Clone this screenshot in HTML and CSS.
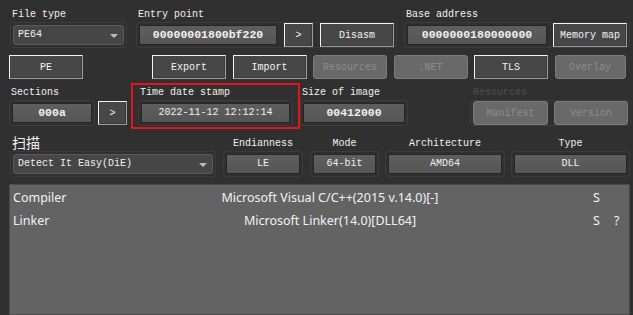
FILE: index.html
```html
<!DOCTYPE html>
<html lang="en">
<head>
  <meta charset="UTF-8">
  <title>Detect It Easy - PE</title>
  <link rel="stylesheet" href="styles.css">
</head>
<body>
  <div class="row row-top">
    <div class="grp g-filetype">
      <div class="lbl">File type</div>
      <div class="frame">
        <div class="combo w-ft">PE64<span class="arrow"></span></div>
      </div>
    </div>
    <div class="grp g-entry">
      <div class="lbl">Entry point</div>
      <div class="frame">
        <div class="field bold w-entry">00000001800bf220</div>
        <button class="btn w-go">&gt;</button>
        <button class="btn w-disasm">Disasm</button>
      </div>
    </div>
    <div class="grp g-base">
      <div class="lbl">Base address</div>
      <div class="frame">
        <div class="field bold w-base">0000000180000000</div>
        <button class="btn w-mmap">Memory map</button>
      </div>
    </div>
  </div>

  <div class="row row-btns">
    <button class="btn w-74">PE</button>
    <button class="btn w-74 b-export">Export</button>
    <button class="btn w-74">Import</button>
    <button class="btn w-74 off">Resources</button>
    <button class="btn w-74 off">.NET</button>
    <button class="btn w-74">TLS</button>
    <button class="btn w-72 off">Overlay</button>
  </div>

  <div class="row row-sec">
    <div class="grp g-sections">
      <div class="lbl">Sections</div>
      <div class="frame">
        <div class="field bold w-sec">000a</div>
      </div>
    </div>
    <button class="btn w-go b-sec">&gt;</button>
    <div class="grp g-time">
      <div class="lbl">Time date stamp</div>
      <div class="frame">
        <div class="field w-time">2022-11-12 12:12:14</div>
      </div>
    </div>
    <div class="grp g-size">
      <div class="lbl">Size of image</div>
      <div class="frame">
        <div class="field bold w-size">00412000</div>
      </div>
    </div>
    <div class="grp g-res">
      <div class="lbl dim">Resources</div>
      <div class="frame">
        <button class="btn off w-manifest">Manifest</button>
        <button class="btn off w-74">Version</button>
      </div>
    </div>
  </div>

  <div class="row row-scan">
    <div class="grp g-scan">
      <div class="lbl cjk">扫描</div>
      <div class="frame">
        <div class="combo w-scan">Detect It Easy(DiE)<span class="arrow"></span></div>
      </div>
    </div>
    <div class="grp g-endian center">
      <div class="lbl">Endianness</div>
      <div class="frame">
        <div class="field w-le">LE</div>
      </div>
    </div>
    <div class="grp g-mode center">
      <div class="lbl">Mode</div>
      <div class="frame">
        <div class="field w-mode">64-bit</div>
      </div>
    </div>
    <div class="grp g-arch center">
      <div class="lbl">Architecture</div>
      <div class="frame">
        <div class="field w-arch">AMD64</div>
      </div>
    </div>
    <div class="grp g-type center">
      <div class="lbl">Type</div>
      <div class="frame">
        <div class="field w-type">DLL</div>
      </div>
    </div>
  </div>

  <div class="results">
    <div class="res-row">
      <span class="res-name">Compiler</span>
      <span class="res-val">Microsoft Visual C/C++(2015 v.14.0)[-]</span>
      <span class="res-s">S</span>
      <span class="res-q"></span>
    </div>
    <div class="res-row">
      <span class="res-name">Linker</span>
      <span class="res-val">Microsoft Linker(14.0)[DLL64]</span>
      <span class="res-s">S</span>
      <span class="res-q">?</span>
    </div>
  </div>
</body>
</html>
```

FILE: styles.css
```css
* {
  box-sizing: border-box;
}
body {
  margin: 0;
  width: 633px;
  height: 315px;
  background-color: #303030;
  color: #f0f0f0;
  font-family: "Liberation Mono", "DejaVu Sans Mono", monospace;
  font-size: 10px;
  overflow: hidden;
}
.row {
  display: flex;
  align-items: flex-end;
}
.grp {
  display: flex;
  flex-direction: column;
}
.lbl {
  height: 14px;
  line-height: 14px;
  padding-left: 2px;
  white-space: pre;
}
.lbl.dim {
  color: #4e4e4e;
}
.lbl.cjk {
  font-family: "Noto Sans CJK SC", sans-serif;
  font-size: 14px;
  height: 17px;
  line-height: 16px;
}
.center .lbl {
  text-align: center;
  padding-left: 0;
}
.frame {
  display: flex;
  align-items: center;
  height: 26px;
  padding: 0 2px;
  border: 1px solid #3b3b3b;
  border-radius: 3px;
}

/* inputs */
.field {
  height: 20px;
  line-height: 18px;
  background: linear-gradient(#5e5e5e, #565656);
  border: 1px solid #262626;
  text-align: center;
  white-space: pre;
}
.bold {
  font-weight: bold;
  font-size: 11.5px;
}
.combo {
  position: relative;
  height: 20px;
  line-height: 18px;
  padding-left: 4px;
  background-color: #464646;
  border: 1px solid #5a5a5a;
  border-radius: 3px;
  white-space: pre;
}
.arrow {
  position: absolute;
  right: 5px;
  top: 8px;
  border-left: 4px solid transparent;
  border-right: 4px solid transparent;
  border-top: 4px solid #bdbdbd;
}

/* buttons */
.btn {
  height: 24px;
  padding: 0;
  font-family: inherit;
  font-size: 10px;
  color: #f4f4f4;
  background-color: #474747;
  border: 1px solid;
  border-color: #f2f2f2 #9c9c9c #9c9c9c #f2f2f2;
  box-shadow: inset -1px -1px 0 #3a3a3a;
  white-space: pre;
}
.btn.off {
  color: #8c8c8c;
  background-color: #696969;
  border-color: #7c7c7c;
  border-radius: 3px;
  box-shadow: none;
}

/* row 1 */
.row-top {
  padding-top: 6px;
  height: 48px;
}
.g-filetype { margin-left: 10px; }
.w-ft { width: 111px; }
.g-entry { margin-left: 9px; }
.w-entry { width: 138px; }
.w-go { width: 29px; margin-left: 7px; }
.w-disasm { width: 74px; margin-left: 7px; }
.g-base { margin-left: 7px; }
.w-base { width: 140px; }
.w-mmap { width: 74px; margin-left: 6px; }

/* row 2 */
.row-btns {
  margin-top: 7px;
  padding-left: 9px;
  gap: 6.5px;
}
.w-74 { width: 74px; }
.w-72 { width: 71px; }
.b-export { margin-left: 62.5px; }

/* row 3 */
.row-sec {
  margin-top: 4px;
  height: 46px;
}
.g-sections {
  margin-left: 9px;
  margin-bottom: 3px;
}
.w-sec { width: 80px; }
.b-sec {
  margin-left: 3px;
  margin-bottom: 4px;
}
.g-time {
  margin-left: 4px;
  width: 169px;
  height: 46px;
  padding: 0 5px 1px 5px;
  border: 2px solid #e3141b;
  justify-content: flex-end;
}
.w-time { width: 151px; }
.g-size {
  margin-bottom: 3px;
}
.w-size { width: 102px; }
.g-res {
  margin-left: 62px;
  margin-bottom: 3px;
}
.g-res .lbl { padding-left: 3px; }
.g-res .frame { gap: 6px; }
.w-manifest { width: 75px; }

/* row 4 */
.row-scan {
  margin-top: 5px;
}
.g-scan { margin-left: 10px; }
.w-scan { width: 200px; }
.g-endian { margin-left: 7px; }
.w-le { width: 74px; }
.g-mode { margin-left: 7px; }
.w-mode { width: 63px; }
.g-arch { margin-left: 6px; }
.w-arch { width: 114px; }
.g-type { margin-left: 6px; }
.w-type { width: 113px; }

/* results list */
.results {
  margin: 7px 0 0 9px;
  width: 621px;
  height: 131px;
  background-color: #636363;
  border: 1px solid #4a4a4a;
  font-family: "Noto Sans", "Open Sans", sans-serif;
  font-size: 12.5px;
  color: #f2f2f2;
  padding: 2px 0 0 3px;
}
.res-row {
  display: grid;
  grid-template-columns: 130px 374px 97px 1fr;
  height: 22.5px;
  line-height: 22px;
}
.res-val {
  text-align: center;
  white-space: nowrap;
}
.res-s {
  padding-left: 76px;
}
```
